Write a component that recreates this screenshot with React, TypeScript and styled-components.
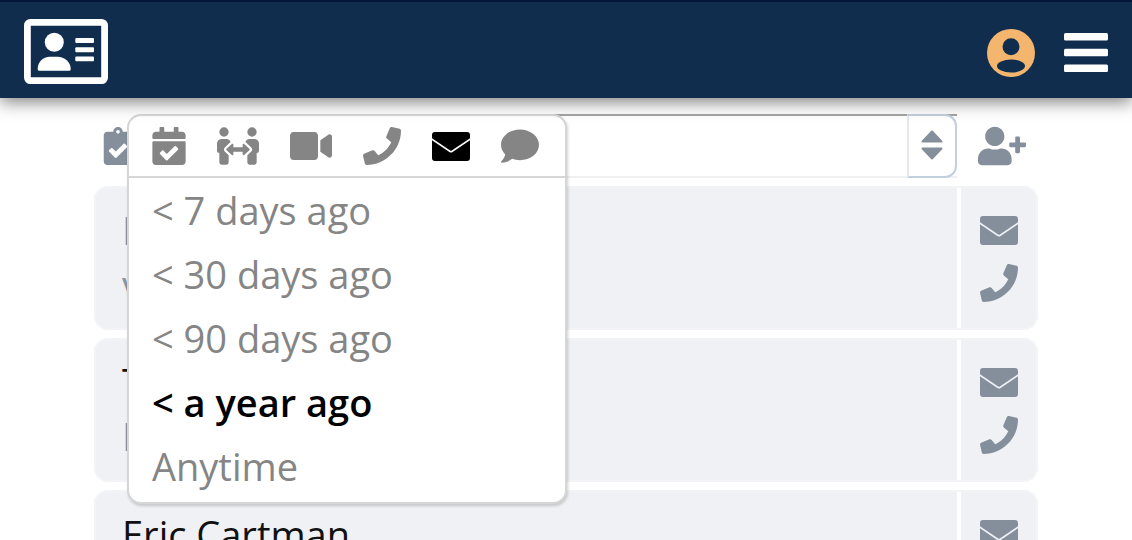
import { createGlobalStyle, styled } from 'styled-components';
import {
  FaCalendarCheck,
  FaClipboardCheck,
  FaComment,
  FaPeopleArrows,
  FaPhone,
  FaUserPlus,
  FaVideo,
} from 'react-icons/fa';

const GlobalStyle = createGlobalStyle`
  html, body {
    margin: 0;
    height: 100%;
    overflow: hidden;
    background: #ffffff;
    font-family: 'Open Sans', 'Liberation Sans', sans-serif;
  }
`;

const Page = styled.div`
  position: relative;
  width: 1132px;
  height: 540px;
  overflow: hidden;
`;

const Header = styled.header`
  position: relative;
  z-index: 2;
  box-sizing: border-box;
  height: 98px;
  padding: 5px 24px 0;
  display: flex;
  align-items: center;
  justify-content: space-between;
  background: #112d4e;
  border-top: 2px solid #04153a;
  box-shadow: 0 4px 16px rgba(0, 0, 0, 0.5);
`;

const LogoMark = styled.svg`
  margin-bottom: 3px;
`;

const HeaderActions = styled.div`
  display: flex;
  align-items: center;
  gap: 29px;
`;

const Avatar = styled.div`
  width: 48px;
  height: 48px;
  border-radius: 50%;
  background: #f4b56f;
  overflow: hidden;
  color: #112d4e;
`;

const Content = styled.main`
  padding: 16px 94px 0;
`;

const Toolbar = styled.div`
  display: flex;
  align-items: center;
  height: 64px;
  margin-bottom: 8px;
  color: #858f9c;
`;

const ToolIcon = styled.div`
  width: 34px;
  display: flex;
  justify-content: center;
  margin-left: 7px;
`;

const SelectBox = styled.div`
  flex: 1;
  height: 64px;
  box-sizing: border-box;
  margin-left: 12px;
  display: flex;
  justify-content: flex-end;
  border-top: 2px solid #a5a5a5;
  border-bottom: 2px solid #eef0f2;
`;

const SortButton = styled.div`
  width: 50px;
  margin: -2px 0;
  padding-bottom: 2px;
  box-sizing: border-box;
  display: flex;
  align-items: center;
  justify-content: center;
  border: 2px solid #c3cfdd;
  border-left: 2px solid #e6e8eb;
  border-radius: 0 12px 12px 0;
`;

const AddContact = styled.div`
  width: 81px;
  display: flex;
  justify-content: flex-end;
  padding-right: 12px;
  box-sizing: border-box;
`;

const CardList = styled.div`
  display: flex;
  flex-direction: column;
  gap: 8px;
`;

const Card = styled.article`
  display: flex;
  height: 144px;
  flex-shrink: 0;
  box-sizing: border-box;
  background: #eff1f5;
  border: 2px solid #f3f4f7;
  border-radius: 14px;
  overflow: hidden;
`;

const CardBody = styled.div`
  flex: 1;
  padding: 15px 26px;
  font-size: 38px;
  line-height: 54px;
`;

const CardLine = styled.div<{ $muted?: boolean }>`
  white-space: nowrap;
  color: ${(p) => (p.$muted ? '#8a94a1' : '#111111')};
`;

const CardActions = styled.div`
  width: 79px;
  border-left: 4px solid #ffffff;
  display: flex;
  flex-direction: column;
  align-items: center;
  gap: 19px;
  padding-top: 28px;
  box-sizing: border-box;
  color: #858f9c;
`;

const Menu = styled.div`
  position: absolute;
  z-index: 1;
  left: 127px;
  top: 114px;
  width: 440px;
  height: 390px;
  box-sizing: border-box;
  background: #ffffff;
  border: 2px solid #d6d6d6;
  border-radius: 14px;
  box-shadow: 1px 2px 3px rgba(0, 0, 0, 0.18);
`;

const MenuTabs = styled.div`
  height: 62px;
  box-sizing: border-box;
  padding-left: 23px;
  display: flex;
  align-items: center;
  gap: 31px;
  border-bottom: 2px solid #d6d6d6;
`;

const MenuTab = styled.div<{ $active?: boolean; $width: number }>`
  width: ${(p) => p.$width}px;
  display: flex;
  justify-content: center;
  color: ${(p) => (p.$active ? '#000000' : '#858585')};
`;

const MenuItem = styled.div<{ $active?: boolean }>`
  height: 64px;
  padding-left: 23px;
  display: flex;
  align-items: center;
  font-size: 38px;
  font-weight: ${(p) => (p.$active ? 600 : 400)};
  color: ${(p) => (p.$active ? '#000000' : '#858585')};
`;

function Logo() {
  return (
    <LogoMark width="84" height="65" viewBox="0 0 84 65">
      <rect x="3.4" y="3.4" width="77.2" height="58.2" rx="3" fill="none" stroke="#fff" strokeWidth="6.8" />
      <circle cx="30.3" cy="23.2" r="9.5" fill="#fff" />
      <path d="M15 51.7c-1 0-1.3-1-1.3-2 0-7 5.5-12 12-12h8c6.500 0 13 5 13 12 0 1-.3 2-1.300 2z" fill="#fff" />
      <rect x="51.300" y="19" width="18.700" height="5" rx="1" fill="#fff" />
      <rect x="51.300" y="28.300" width="18.700" height="5" rx="1" fill="#fff" />
      <rect x="51.300" y="37.500" width="18.700" height="4.800" rx="1" fill="#fff" />
    </LogoMark>
  );
}

function Burger() {
  return (
    <svg width="44" height="39" viewBox="0 0 44 39" fill="#ffffff">
      <rect y="0" width="44" height="7.5" rx="1.5" />
      <rect y="15.7" width="44" height="7.5" rx="1.5" />
      <rect y="31.5" width="44" height="7.5" rx="1.5" />
    </svg>
  );
}

function Mail() {
  return (
    <svg width="38" height="29" viewBox="0 0 38 29" fill="currentColor">
      <path d="M3 0h32a3 3 0 0 1 3 3v3.2L19.800 18.600a1.500 1.500 0 0 1-1.600 0L0 6.200V3a3 3 0 0 1 3-3z" />
      <path d="M0 8.200l17.400 11.900a3 3 0 0 0 3.200 0L38 8.200V26a3 3 0 0 1-3 3H3a3 3 0 0 1-3-3z" />
    </svg>
  );
}

function SortArrows() {
  return (
    <svg width="22" height="30" viewBox="0 0 22 30" fill="currentColor" stroke="currentColor" strokeWidth="2" strokeLinejoin="round">
      <path d="M11 1.500L20.500 11.500H1.500z" />
      <path d="M11 28.500L20.500 18.500H1.500z" />
    </svg>
  );
}

function Contact({ first, second, mutedFirst }: { first: string; second: string; mutedFirst?: boolean }) {
  return (
    <Card>
      <CardBody>
        <CardLine $muted={mutedFirst}>{first}</CardLine>
        <CardLine $muted>{second}</CardLine>
      </CardBody>
      <CardActions>
        <Mail />
        <FaPhone size={38} />
      </CardActions>
    </Card>
  );
}

export default function App() {
  return (
    <Page>
      <GlobalStyle />
      <Header>
        <Logo />
        <HeaderActions>
          <Avatar>
            <svg width="48" height="48" viewBox="0 0 48 48" fill="currentColor">
              <circle cx="24" cy="17.7" r="8.5" />
              <ellipse cx="24" cy="37" rx="14" ry="6.5" />
            </svg>
          </Avatar>
          <Burger />
        </HeaderActions>
      </Header>
      <Content>
        <Toolbar>
          <ToolIcon>
            <FaClipboardCheck size={38} />
          </ToolIcon>
          <SelectBox>
            <SortButton>
              <SortArrows />
            </SortButton>
          </SelectBox>
          <AddContact>
            <FaUserPlus size={48} />
          </AddContact>
        </Toolbar>
        <CardList>
          <Contact first="Name" second="vp@southpark.com" mutedFirst />
          <Contact first="Token Black" second="Lead" />
          <Contact first="Eric Cartman" second="Owner" />
        </CardList>
      </Content>
      <Menu>
        <MenuTabs>
          <MenuTab $width={34}>
            <FaCalendarCheck size={38} />
          </MenuTab>
          <MenuTab $width={42}>
            <FaPeopleArrows size={42} />
          </MenuTab>
          <MenuTab $width={42}>
            <FaVideo size={42} />
          </MenuTab>
          <MenuTab $width={38}>
            <FaPhone size={38} />
          </MenuTab>
          <MenuTab $width={38} $active>
            <Mail />
          </MenuTab>
          <MenuTab $width={38}>
            <FaComment size={38} />
          </MenuTab>
        </MenuTabs>
        <MenuItem>&lt; 7 days ago</MenuItem>
        <MenuItem>&lt; 30 days ago</MenuItem>
        <MenuItem>&lt; 90 days ago</MenuItem>
        <MenuItem $active>&lt; a year ago</MenuItem>
        <MenuItem>Anytime</MenuItem>
      </Menu>
    </Page>
  );
}
